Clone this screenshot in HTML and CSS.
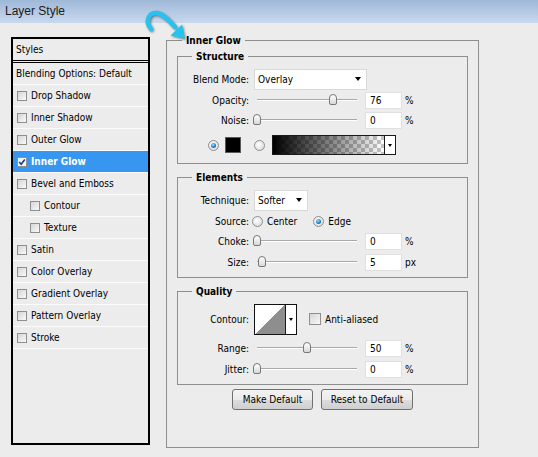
FILE: index.html
```html
<!DOCTYPE html>
<html lang="en">
<head>
  <meta charset="UTF-8">
  <title>Layer Style</title>
  <link rel="stylesheet" href="styles.css">
</head>
<body>
  <div class="titlebar">Layer Style</div>

  <!-- callout arrow pointing at the panel title -->
  <svg class="pointer" width="50" height="40" viewBox="140 4 50 40">
    <path d="M151 29 C145 22 148 12 157 13 C163 14 168 19 175 27" fill="none" stroke="#27c3ee" stroke-width="4.5" stroke-linecap="round"/>
    <polygon points="185,39 182,24.5 170.5,35.5" fill="#27c3ee"/>
  </svg>

  <div class="dialog">
    <div class="styles-panel">
      <div class="panel-head">Styles</div>
      <ul class="style-list">
        <li class="item plain">Blending Options: Default</li>
        <li class="item"><span class="check"></span>Drop Shadow</li>
        <li class="item"><span class="check"></span>Inner Shadow</li>
        <li class="item"><span class="check"></span>Outer Glow</li>
        <li class="item active">
          <span class="check on">
            <svg width="8" height="8" viewBox="0 0 8 8"><path d="M1.2 4 L3.2 6.2 L6.8 1.4" fill="none" stroke="#1d3b8c" stroke-width="1.6"/></svg>
          </span>Inner Glow
        </li>
        <li class="item"><span class="check"></span>Bevel and Emboss</li>
        <li class="item sub"><span class="check"></span>Contour</li>
        <li class="item sub"><span class="check"></span>Texture</li>
        <li class="item"><span class="check"></span>Satin</li>
        <li class="item"><span class="check"></span>Color Overlay</li>
        <li class="item"><span class="check"></span>Gradient Overlay</li>
        <li class="item"><span class="check"></span>Pattern Overlay</li>
        <li class="item"><span class="check"></span>Stroke</li>
      </ul>
    </div>

    <fieldset class="group effect">
      <legend>Inner Glow</legend>

      <fieldset class="group section structure">
        <legend>Structure</legend>
        <div class="row row-22">
          <span class="lbl">Blend Mode:</span>
          <div class="select wide">Overlay<i class="caret"></i></div>
        </div>
        <div class="row">
          <span class="lbl">Opacity:</span>
          <div class="slider"><i class="thumb" style="left: 76%"></i></div>
          <div class="num">76</div><span class="unit">%</span>
        </div>
        <div class="row">
          <span class="lbl">Noise:</span>
          <div class="slider"><i class="thumb" style="left: 0%"></i></div>
          <div class="num">0</div><span class="unit">%</span>
        </div>
        <div class="row row-22 color-row">
          <span class="radio on first"></span>
          <span class="swatch"></span>
          <span class="radio gap"></span>
          <div class="gradient-pick">
            <div class="ramp"></div>
            <div class="drop"><i class="caret small"></i></div>
          </div>
        </div>
      </fieldset>

      <fieldset class="group section elements">
        <legend>Elements</legend>
        <div class="row row-22">
          <span class="lbl">Technique:</span>
          <div class="select short">Softer<i class="caret"></i></div>
        </div>
        <div class="row">
          <span class="lbl">Source:</span>
          <span class="radio first-inline"></span><span class="opt">Center</span>
          <span class="radio on next"></span><span class="opt">Edge</span>
        </div>
        <div class="row">
          <span class="lbl">Choke:</span>
          <div class="slider"><i class="thumb" style="left: 0%"></i></div>
          <div class="num">0</div><span class="unit">%</span>
        </div>
        <div class="row row-22">
          <span class="lbl">Size:</span>
          <div class="slider"><i class="thumb" style="left: 5%"></i></div>
          <div class="num">5</div><span class="unit">px</span>
        </div>
      </fieldset>

      <fieldset class="group section quality">
        <legend>Quality</legend>
        <div class="row row-32">
          <span class="lbl">Contour:</span>
          <div class="contour">
            <div class="curve"></div>
            <div class="drop"><i class="caret small"></i></div>
          </div>
          <span class="check big"></span><span class="opt">Anti-aliased</span>
        </div>
        <div class="row range-row">
          <span class="lbl">Range:</span>
          <div class="slider"><i class="thumb" style="left: 50%"></i></div>
          <div class="num">50</div><span class="unit">%</span>
        </div>
        <div class="row jitter-row">
          <span class="lbl">Jitter:</span>
          <div class="slider"><i class="thumb" style="left: 0%"></i></div>
          <div class="num">0</div><span class="unit">%</span>
        </div>
      </fieldset>

      <div class="actions">
        <button class="btn make">Make Default</button>
        <button class="btn reset">Reset to Default</button>
      </div>
    </fieldset>
  </div>
</body>
</html>
```

FILE: styles.css
```css
body {
  margin: 0;
  width: 538px;
  height: 457px;
  overflow: hidden;
  position: relative;
  background: #ececec;
  font-family: "DejaVu Sans Condensed", "Liberation Sans", sans-serif;
  font-size: 10px;
  color: #000;
}

.titlebar {
  height: 23px;
  line-height: 23px;
  padding-left: 5px;
  background: linear-gradient(#9fb8d8, #c8d9ee);
  font-family: "Liberation Sans", sans-serif;
  font-size: 12px;
  color: #1b1b1b;
}

.pointer {
  position: absolute;
  left: 140px;
  top: 4px;
  filter: drop-shadow(1px 1px 1px rgba(0, 0, 0, 0.45));
}

.dialog {
  display: flex;
  align-items: flex-start;
  gap: 16px;
  padding: 14px 0 0 11px;
}

/* left list of effects */
.styles-panel {
  width: 139px;
  height: 408px;
  box-sizing: border-box;
  border: 2px solid #000;
}

.panel-head {
  height: 21px;
  line-height: 21px;
  padding-left: 3px;
  border-bottom: 3px double #000;
}

.style-list {
  list-style: none;
  margin: 0;
  padding: 0;
}

.item {
  height: 21px;
  border-bottom: 1px solid #fcfcfc;
  display: flex;
  align-items: center;
  gap: 4px;
  padding-left: 4px;
}

.item.plain {
  padding-left: 3px;
}

.item.sub {
  padding-left: 17px;
}

.item.active {
  background: #3797f0;
  color: #fff;
  font-weight: bold;
}

.check {
  flex: none;
  width: 10px;
  height: 10px;
  box-sizing: border-box;
  border: 1px solid #8e8f8f;
  background: linear-gradient(135deg, #d6d6d6, #f9f9f9);
  display: flex;
  align-items: center;
  justify-content: center;
}

.check.on {
  background: #f4f4f4;
}

.check.big {
  width: 12px;
  height: 12px;
  margin-left: 12px;
}

/* group boxes */
.group {
  margin: 0;
  padding: 0;
  min-inline-size: 0;
  box-sizing: border-box;
  border: 1px solid #8e8e8e;
}

.group > legend {
  padding: 0 4px;
  font-weight: bold;
  line-height: 13px;
}

.effect {
  width: 313px;
  height: 414px;
  margin-top: -3px;
  padding: 3px 10px 0;
}

.effect > legend {
  margin-left: 5px;
}

.section > legend {
  margin-left: 14px;
}

.structure {
  padding: 5px 0 7px;
}

.elements {
  margin-top: 7px;
  padding: 5px 0 4px;
}

.quality {
  margin-top: 7px;
  padding: 5px 0 5px;
}

.row {
  display: flex;
  align-items: center;
  height: 20px;
}

.row-22 {
  height: 22px;
}

.row-32 {
  height: 32px;
}

.color-row {
  margin-top: 4px;
}

.range-row {
  margin-top: 3px;
}

.jitter-row {
  margin-top: 1px;
}

.lbl {
  flex: none;
  width: 71px;
  text-align: right;
}

.select {
  margin-left: 5px;
  height: 21px;
  box-sizing: border-box;
  background: #fff;
  border: 1px solid #d9d9d9;
  display: flex;
  align-items: center;
  justify-content: space-between;
  padding: 0 5px 0 3px;
}

.select.wide {
  width: 113px;
}

.select.short {
  width: 54px;
}

.caret {
  width: 0;
  height: 0;
  border-left: 3.5px solid transparent;
  border-right: 3.5px solid transparent;
  border-top: 4px solid #000;
}

.caret.small {
  border-left-width: 2.5px;
  border-right-width: 2.5px;
  border-top-width: 3px;
}

.slider {
  position: relative;
  width: 100px;
  height: 0;
  margin-left: 8px;
  border-top: 1px solid #a9a9a9;
  border-bottom: 1px solid #fff;
}

.thumb {
  position: absolute;
  top: -6px;
  width: 8px;
  height: 11px;
  margin-left: -4px;
  box-sizing: border-box;
  border: 1px solid #777;
  border-radius: 4px 4px 2px 2px;
  background: linear-gradient(#fff, #d8d8d8);
}

.num {
  margin-left: 8px;
  width: 37px;
  height: 17px;
  box-sizing: border-box;
  background: #fff;
  border: 1px solid #e0e0e0;
  padding-left: 4px;
  line-height: 15px;
}

.unit {
  margin-left: 3px;
}

/* radios */
.radio {
  flex: none;
  width: 11px;
  height: 11px;
  box-sizing: border-box;
  border-radius: 50%;
  border: 1px solid #8e8f8f;
  background: radial-gradient(circle at 40% 40%, #fff, #d4d4d4);
  display: flex;
  align-items: center;
  justify-content: center;
}

.radio.on::after {
  content: "";
  width: 5px;
  height: 5px;
  border-radius: 50%;
  background: radial-gradient(circle at 40% 35%, #9fe0ff, #1b78c4 60%, #0b4f8a);
}

.radio.first {
  margin-left: 30px;
}

.radio.gap {
  margin-left: 13px;
}

.radio.first-inline {
  margin-left: 3px;
}

.radio.next {
  margin-left: 16px;
}

.opt {
  margin-left: 4px;
}

.swatch {
  margin-left: 6px;
  width: 16px;
  height: 16px;
  box-sizing: border-box;
  background: #000;
  border: 1px solid #5a5a5a;
}

.gradient-pick {
  margin-left: 7px;
  width: 124px;
  height: 20px;
  box-sizing: border-box;
  border: 1px solid #1a1a1a;
  display: flex;
}

.ramp {
  flex: 1;
  background:
    linear-gradient(to right, #000, rgba(0, 0, 0, 0)),
    repeating-conic-gradient(#c6c6c6 0 25%, #fff 0 50%) 0 0 / 8px 8px;
}

.drop {
  width: 10px;
  border-left: 1px solid #1a1a1a;
  background: #fff;
  display: flex;
  align-items: center;
  justify-content: center;
}

.contour {
  margin-left: 5px;
  width: 43px;
  height: 31px;
  box-sizing: border-box;
  border: 1px solid #111;
  display: flex;
}

.curve {
  flex: 1;
  background: linear-gradient(to top left, #8e8e8e 50%, #fff 50%);
}

/* buttons */
.actions {
  display: flex;
  justify-content: center;
  gap: 8px;
  margin-top: 4px;
}

.btn {
  height: 21px;
  padding: 0;
  font-family: inherit;
  font-size: 10px;
  color: #000;
  border: 1px solid #707070;
  border-radius: 3px;
  background: linear-gradient(#f3f3f3 0%, #ebebeb 50%, #dddddd 51%, #cfcfcf 100%);
}

.btn.make {
  width: 81px;
}

.btn.reset {
  width: 92px;
}
```
